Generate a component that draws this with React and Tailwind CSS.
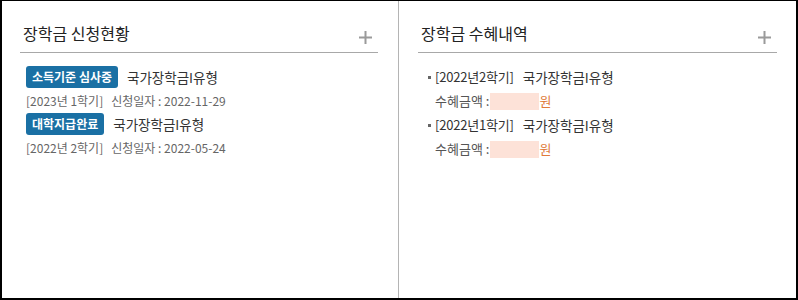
import React from 'react';

const font = { fontFamily: '"Noto Sans CJK KR", "Noto Sans", sans-serif' };

const Plus = () => (
  <svg width="13" height="13" viewBox="0 0 13 13" className="mb-[1px] mr-[6px]">
    <path d="M6.5 0v13M0 6.5h13" stroke="#9a9a9a" strokeWidth="2" />
  </svg>
);

const PanelHeader = ({ title }) => (
  <div className="flex items-end justify-between border-b border-[#a8a8a8] pt-5 pb-[7px]">
    <h2 className="pl-[3px] text-[16px] leading-[24px] text-[#222]">{title}</h2>
    <Plus />
  </div>
);

const Badge = ({ children }) => (
  <span className="inline-flex h-[22px] items-center rounded-[3px] bg-[#1a70a4] px-[6px] text-[12px] font-bold text-white">
    {children}
  </span>
);

const applications = [
  { status: '소득기준 심사중', term: '[2023년 1학기]', date: '2022-11-29' },
  { status: '대학지급완료', term: '[2022년 2학기]', date: '2022-05-24' },
];

const benefits = ['[2022년2학기]', '[2022년1학기]'];

export default function App() {
  return (
    <div style={font} className="flex h-[300px] w-[798px] border-2 border-t border-black bg-white">
      <section className="w-[397px] border-r border-[#b4b4b4] pl-[18px] pr-5">
        <PanelHeader title="장학금 신청현황" />
        <ul className="mt-[13px] pl-[6px]">
          {applications.map((a) => (
            <li key={a.date}>
              <div className="flex h-[22px] items-center gap-[9px]">
                <Badge>{a.status}</Badge>
                <span className="text-[13.5px] text-[#333]">국가장학금I유형</span>
              </div>
              <div className="flex gap-[8px] text-[12px] leading-[25px] text-[#666]">
                <span>{a.term}</span>
                <span>신청일자 : {a.date}</span>
              </div>
            </li>
          ))}
        </ul>
      </section>
      <section className="flex-1 pl-[19px] pr-[19px]">
        <PanelHeader title="장학금 수혜내역" />
        <ul className="mt-3 pl-[10px]">
          {benefits.map((t) => (
            <li key={t} className="text-[13px] leading-[24px]">
              <div className="flex items-center">
                <span className="mr-[4px] h-[3px] w-[3px] bg-[#666]" />
                <span className="tracking-[-0.2px] text-[#333]">{t}</span>
                <span className="ml-[9px] text-[13.5px] text-[#333]">국가장학금I유형</span>
              </div>
              <div className="flex items-center pl-[7px] text-[#555]">
                <span>수혜금액 :</span>
                <span className="ml-[1px] h-[17px] w-[49px] bg-[#fde2d8]" />
                <span className="text-[#e07a3a]">원</span>
              </div>
            </li>
          ))}
        </ul>
      </section>
    </div>
  );
}
